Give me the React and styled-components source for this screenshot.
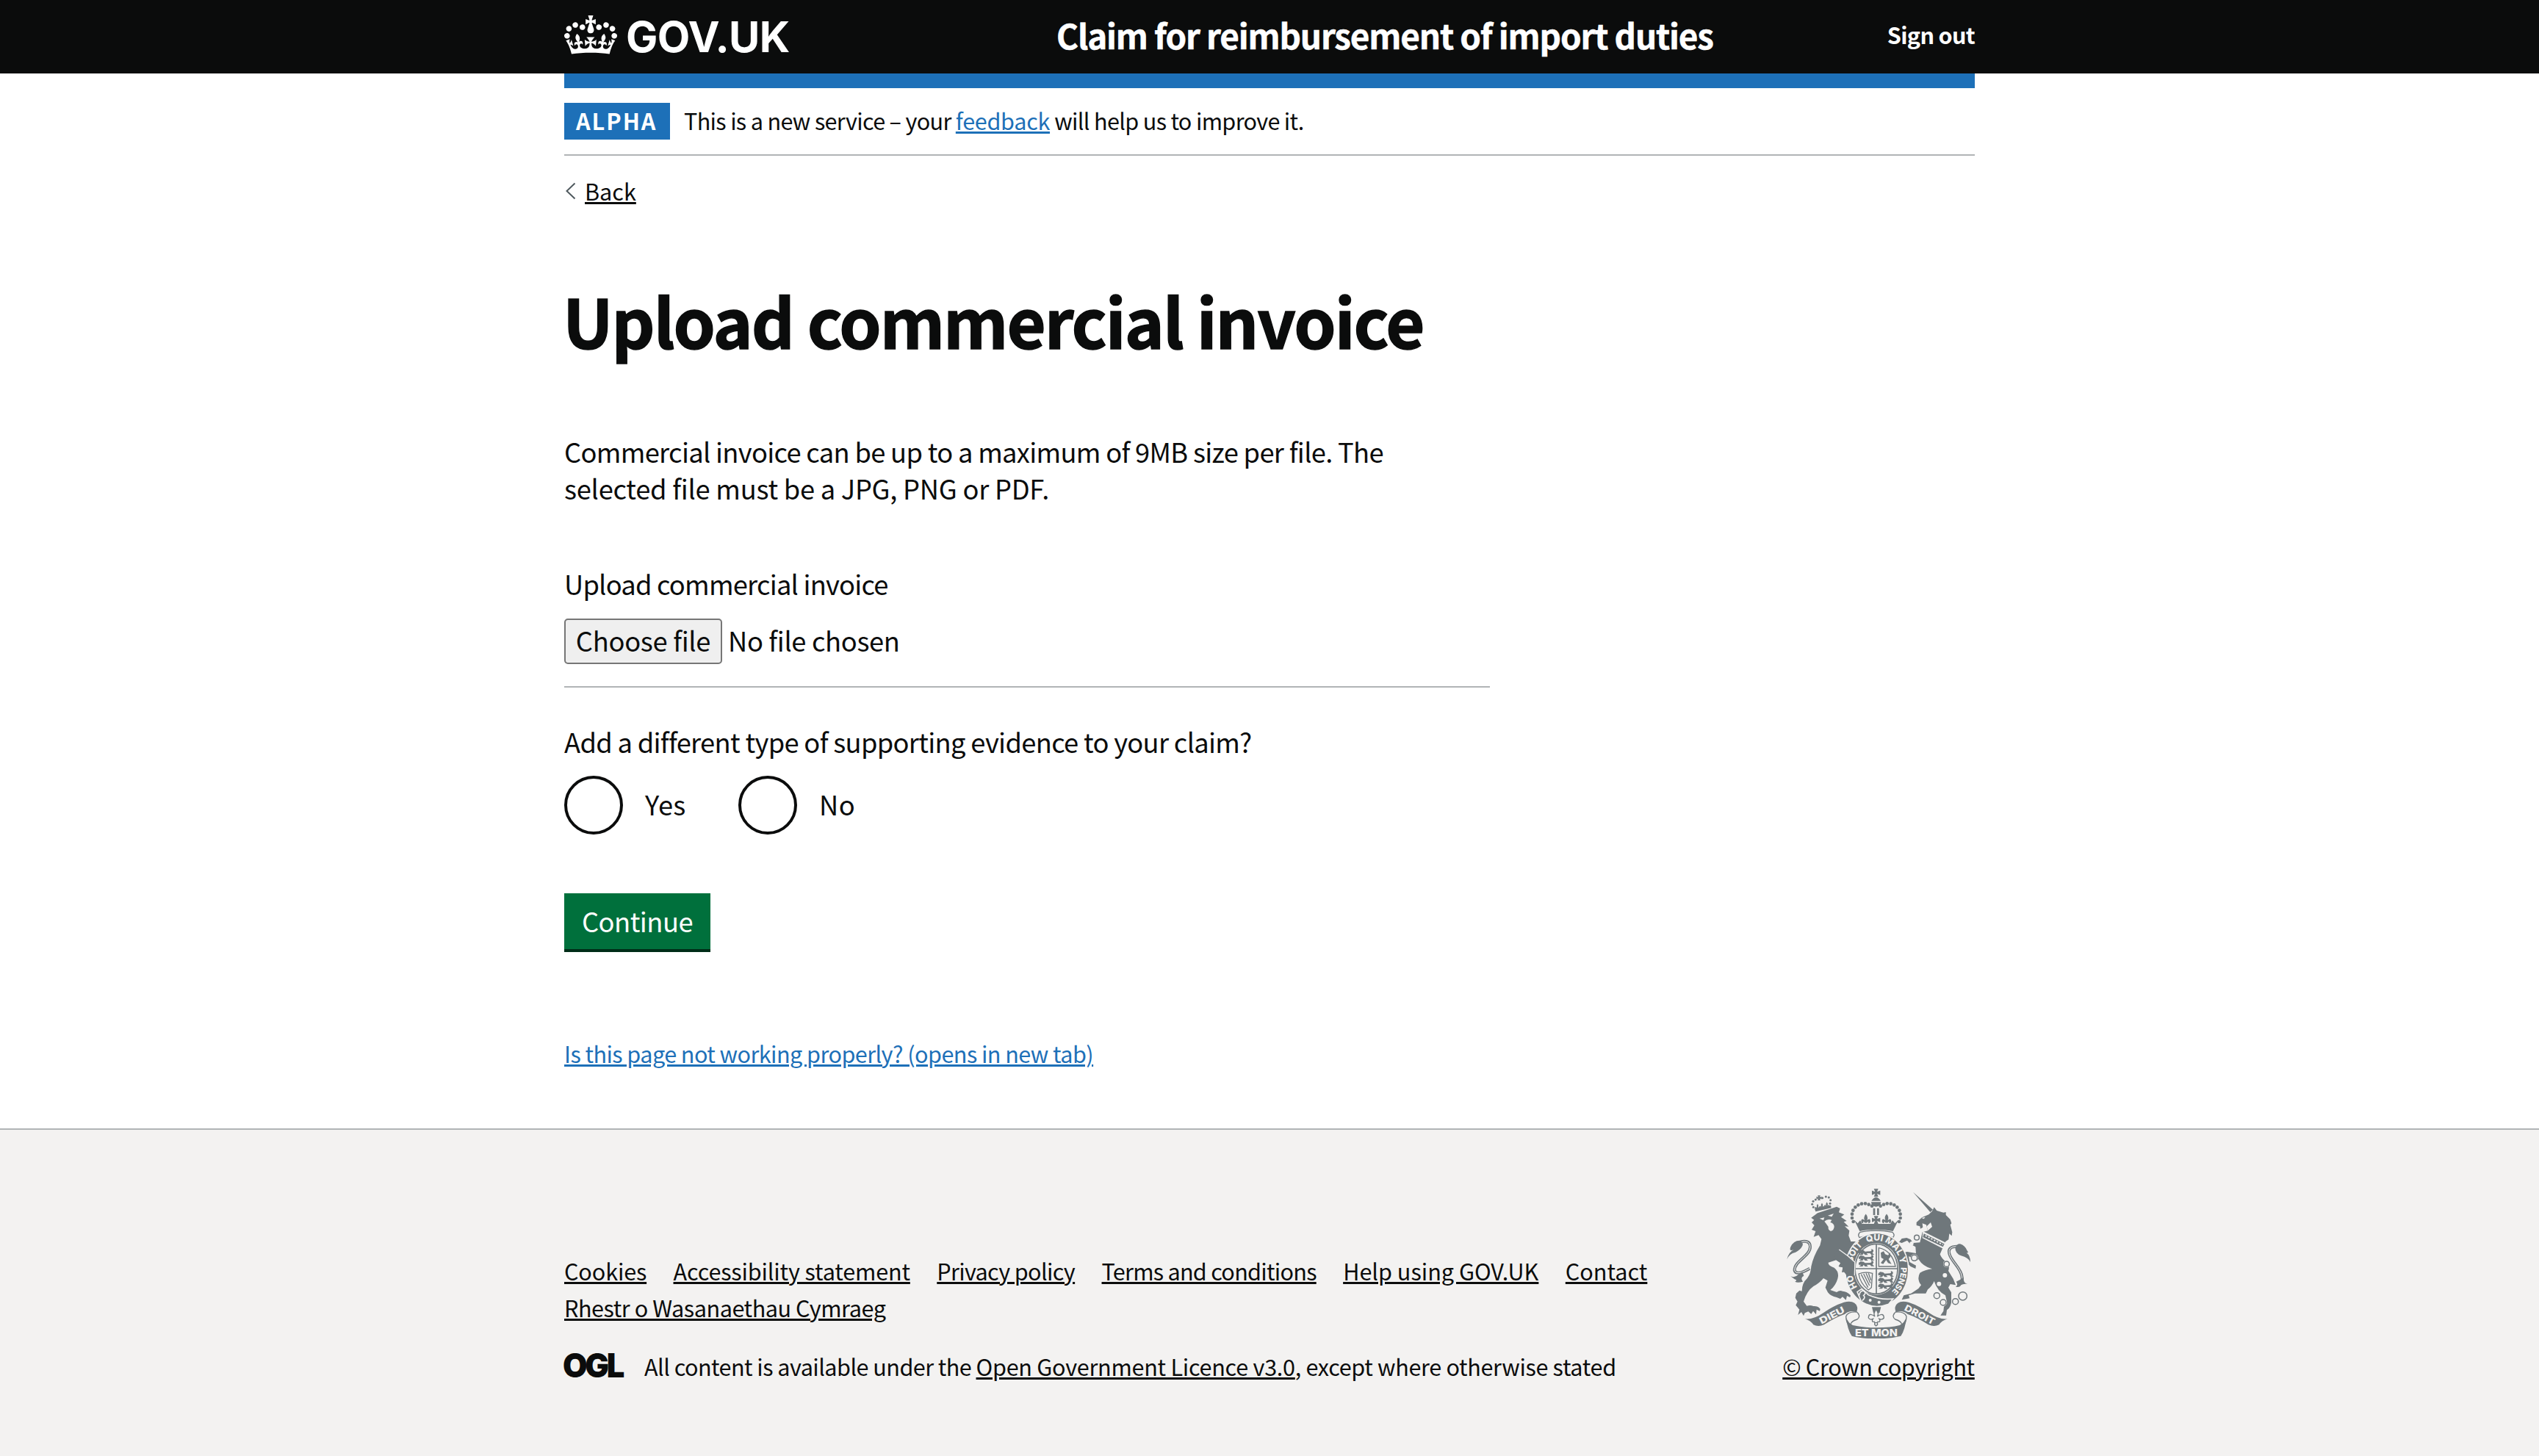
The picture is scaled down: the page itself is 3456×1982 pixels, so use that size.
import React from "react";
import styled, { createGlobalStyle } from "styled-components";

const ink = "#0b0c0c";
const blue = "#1d70b8";
const line = "#b1b4b6";
const crest = "#6f777b";
const paper = "#f3f2f1";

const GlobalStyle = createGlobalStyle`
  *, *::before, *::after { box-sizing: border-box; }
  body {
    margin: 0;
    background: ${paper};
    color: ${ink};
    font-family: "Noto Sans CJK JP", "Noto Sans", sans-serif;
    font-size: 36.3px;
    line-height: 50px;
  }
`;

const Page = styled.div`
  display: flex;
  flex-direction: column;
  height: 1982px;
  background: #fff;
  overflow: hidden;
`;

const Container = styled.div`
  width: 1920px;
  margin: 0 auto;
`;

const Track = styled.span`
  letter-spacing: ${(p) => p.$ls}px;
`;

const Link = styled.a`
  color: ${(p) => (p.$blue ? blue : ink)};
  letter-spacing: ${(p) => p.$ls || 0}px;
  text-decoration: underline;
  text-decoration-thickness: 3px;
  text-underline-offset: 2px;
  white-space: nowrap;
`;

/* Header */
const Header = styled.header`
  background: ${ink};
  height: 100px;
  flex: none;
`;

const HeaderRow = styled(Container)`
  display: grid;
  grid-template-columns: 670px 1fr auto;
  align-items: start;
  color: #fff;
`;

const Brand = styled.div`
  display: flex;
  align-items: flex-start;
  gap: 12px;
  padding-top: 21px;
`;

const Wordmark = styled.span`
  font-family: Inter, sans-serif;
  font-weight: 700;
  font-size: 57.8px;
  line-height: 60px;
  letter-spacing: -0.6px;
  margin-top: -1px;
`;

const ServiceName = styled.div`
  padding-top: 17px;
  font-weight: 700;
  font-size: 45.8px;
  line-height: 60px;
  letter-spacing: -1.15px;
  -webkit-text-stroke: 0.5px #fff;
  white-space: nowrap;
`;

const SignOut = styled.div`
  padding-top: 27px;
  font-weight: 700;
  font-size: 30.6px;
  line-height: 40px;
  letter-spacing: -0.7px;
`;

/* Phase banner */
const BlueBar = styled.div`
  height: 20px;
  background: ${blue};
`;

const Phase = styled.div`
  display: flex;
  align-items: center;
  height: 92px;
  border-bottom: 2px solid ${line};
  font-size: 30.6px;
  line-height: 40px;
`;

const PhaseText = styled.span`
  padding-bottom: 2px;
  letter-spacing: -0.67px;
`;

const Tag = styled.strong`
  width: 144px;
  height: 50px;
  padding: 4px 0 0 16px;
  margin-right: 19px;
  background: ${blue};
  color: #fff;
  font-size: 30.6px;
  line-height: 40px;
  letter-spacing: 2px;
`;

const BackRow = styled.div`
  display: flex;
  align-items: center;
  gap: 12px;
  margin-top: 28px;
  padding-left: 2px;
  font-size: 30.6px;
  line-height: 40px;
`;

/* Main */
const Main = styled.main`
  width: 1260px;
  flex: none;
`;

const Title = styled.h1`
  margin: 105px 0 104px -2px;
  font-size: 91.7px;
  line-height: 100px;
  font-weight: 700;
  letter-spacing: -2px;
  -webkit-text-stroke: 1.4px ${ink};
  white-space: nowrap;
`;

const Body = styled.p`
  margin: 0;
  display: flex;
  flex-direction: column;
  white-space: nowrap;
`;

const Label = styled.div`
  margin-top: ${(p) => p.$top}px;
  letter-spacing: ${(p) => p.$ls}px;
`;

const FileInput = styled.div`
  display: flex;
  align-items: center;
  gap: 8px;
  margin-top: 23px;
  height: 62px;
`;

const FileButton = styled.button`
  width: 215px;
  height: 62px;
  padding: 0 0 5px;
  border: 2px solid #767676;
  border-radius: 5px;
  background: #efefef;
  color: ${ink};
  font: inherit;
  letter-spacing: -0.3px;
  white-space: nowrap;
`;

const FileStatus = styled.span`
  padding-bottom: 5px;
  letter-spacing: -0.35px;
`;

const Rule = styled.hr`
  margin: 30px 0 0;
  border: 0;
  height: 2px;
  background: ${line};
`;

const Radios = styled.div`
  display: flex;
  margin-top: 22px;
`;

const Radio = styled.label`
  display: flex;
  align-items: center;
  width: ${(p) => p.$w}px;
`;

const Ring = styled.span`
  width: 80px;
  height: 80px;
  margin-right: 30px;
  border: 4px solid ${ink};
  border-radius: 50%;
`;

const RadioText = styled.span`
  padding-bottom: 4px;
  letter-spacing: ${(p) => p.$ls}px;
`;

const Submit = styled.button`
  display: block;
  width: 199px;
  height: 76px;
  margin: 80px 0 0;
  padding: 0 0 3px;
  border: 0;
  background: #00703c;
  box-shadow: 0 4px 0 #002d18;
  color: #fff;
  font: inherit;
  letter-spacing: -0.5px;
`;

const Report = styled.div`
  margin-top: 122px;
  font-size: 30.6px;
  line-height: 40px;
`;

/* Footer */
const Footer = styled.footer`
  flex: 1;
  margin-top: 82px;
  border-top: 2px solid ${line};
  background: ${paper};
  font-size: 30.6px;
  line-height: 50px;
`;

const FooterRow = styled(Container)`
  display: flex;
  justify-content: space-between;
  align-items: flex-end;
  padding-top: 80px;
`;

const FooterLinks = styled.div`
  display: flex;
  flex-wrap: wrap;
  width: 1560px;
  column-gap: 36.4px;
`;

const Licence = styled.div`
  display: flex;
  align-items: center;
  height: 40px;
  margin-top: 35px;
  line-height: 40px;
  white-space: nowrap;
`;

const Ogl = styled.span`
  width: 111px;
  margin: -2px 0 0 -2px;
  font-family: Inter, sans-serif;
  font-weight: 900;
  font-size: 45px;
  letter-spacing: -3.5px;
  transform: scaleX(0.965);
  transform-origin: left;
`;

const Copyright = styled.div`
  display: flex;
  flex-direction: column;
  align-items: center;
  gap: 18px;
  width: 262px;
  line-height: 40px;
`;

const CrownIcon = () => (
  <svg width="72" height="53" viewBox="0 0 132 97" fill="#fff">
    <path d="M25 30.2c3.5 1.5 7.7-.2 9.1-3.7 1.5-3.6-.2-7.8-3.9-9.2-3.6-1.4-7.6.3-9.1 3.9-1.4 3.5.3 7.5 3.9 9zM9 39.5c3.6 1.5 7.8-.2 9.2-3.7 1.5-3.6-.2-7.8-3.9-9.1-3.6-1.5-7.6.2-9.1 3.8-1.4 3.5.3 7.5 3.8 9zM4.4 57.2c3.5 1.5 7.7-.2 9.1-3.8 1.5-3.6-.2-7.7-3.9-9.1-3.5-1.5-7.6.3-9.1 3.8-1.4 3.5.3 7.6 3.9 9.1zm38.3-21.4c3.5 1.5 7.7-.2 9.1-3.8 1.5-3.6-.2-7.7-3.9-9.1-3.6-1.5-7.6.3-9.1 3.8-1.3 3.6.4 7.7 3.9 9.1zm64.4-5.6c-3.6 1.5-7.8-.2-9.1-3.7-1.5-3.6.2-7.8 3.8-9.2 3.6-1.4 7.7.3 9.2 3.9 1.3 3.5-.4 7.5-3.9 9zm15.9 9.3c-3.6 1.5-7.7-.2-9.1-3.7-1.5-3.6.2-7.8 3.7-9.1 3.6-1.5 7.7.2 9.2 3.8 1.5 3.5-.3 7.5-3.8 9zm4.7 17.7c-3.6 1.5-7.8-.2-9.2-3.8-1.5-3.6.2-7.7 3.9-9.1 3.6-1.5 7.7.3 9.2 3.8 1.3 3.5-.4 7.6-3.9 9.1zM89.3 35.8c-3.6 1.5-7.8-.2-9.2-3.8-1.4-3.6.2-7.7 3.9-9.1 3.6-1.5 7.7.3 9.2 3.8 1.4 3.6-.3 7.7-3.9 9.1zM69.7 17.7l8.9 4.7V9.3l-8.9 2.8c-.2-.3-.5-.6-.9-.9L72.4 0H59.6l3.5 11.2c-.3.3-.6.5-.9.9l-8.8-2.8v13.1l8.8-4.7c.3.3.6.7.9.9l-5 15.4v.1c-.2.8-.4 1.6-.4 2.4 0 4.1 3.1 7.5 7 8.1h.2c.3 0 .7.1 1 .1.4 0 .7 0 1-.1h.2c4-.6 7.1-4.1 7.1-8.1 0-.8-.1-1.7-.4-2.4V34l-5.1-15.4c.4-.2.7-.6 1-.9zM66 92.8c16.9 0 32.8 1.1 47.1 3.2 4-16.9 8.9-26.7 14-33.5l-9.6-3.4c1 4.9 1.1 7.2 0 10.2-1.5-1.4-3-4.3-4.2-8.7L108.6 76c2.8-2 5-3.2 7.5-3.3-4.4 9.4-10 11.9-13.6 11.2-4.3-.8-6.3-4.6-5.6-7.9 1-4.7 5.7-5.9 8-.5 4.3-8.7-3-11.4-7.6-8.8 7.1-7.2 7.9-13.5 2.1-21.1-8 6.1-8.1 12.3-4.5 20.8-4.7-5.4-12.1-2.5-9.5 6.2 3.4-5.2 7.9-2 7.2 3.1-.6 4.3-6.4 7.8-13.5 7.2-10.3-.9-10.9-8-11.2-13.8 2.5-.5 7.1 1.8 11 7.3L80.2 60c-4.1 4.4-8 5.3-12.3 5.4 1.4-4.4 8-11.6 8-11.6H55.5s6.4 7.2 7.9 11.6c-4.2-.1-8-1-12.3-5.4l1.4 16.4c3.9-5.5 8.5-7.7 10.9-7.3-.3 5.8-.9 12.8-11.1 13.8-7.2.6-12.9-2.9-13.5-7.2-.7-5 3.8-8.3 7.1-3.1 2.7-8.7-4.6-11.6-9.4-6.2 3.7-8.5 3.6-14.7-4.6-20.8-5.8 7.6-5 13.9 2.2 21.1-4.7-2.6-11.9.1-7.7 8.8 2.3-5.5 7.1-4.2 8.1.5.7 3.3-1.3 7.1-5.7 7.9-3.5.7-9-1.8-13.5-11.2 2.5.1 4.7 1.3 7.5 3.3l-4.7-15.4c-1.2 4.4-2.7 7.2-4.3 8.7-1.1-3-.9-5.3 0-10.2l-9.5 3.4c5 6.9 9.9 16.7 14 33.5 14.8-2.1 30.8-3.2 47.7-3.2z" />
  </svg>
);

const archPearls = [
  [368, 219], [363, 204], [363, 188], [367, 173], [376, 160],
  [388, 151], [402, 146], [417, 145], [431, 149], [444, 155],
];

const lionCrownPearls = [
  [205, 160], [200, 148], [204, 136], [214, 129], [242, 122], [256, 117], [268, 120], [275, 131], [273, 145],
];

const chainLinks = [
  [627, 284, 10], [617, 367, 12], [606, 308, 5], [749, 392, 11], [742, 438, 6], [718, 473, 6],
  [709, 521, 12], [735, 549, 12], [785, 545, 12], [815, 523, 17],
];

const Fleur = ({ x, y, s = 1 }) => (
  <path
    transform={`translate(${x} ${y}) scale(${s})`}
    d="M0-28Q12-14 5 0Q18-12 20 2Q20 12 10 12Q14 6 8 5L5 10H-5L-8 5Q-14 6-10 12Q-20 12-20 2Q-18-12-5 0Q-12-14 0-28Z"
  />
);

const Pattee = ({ x, y, s = 1 }) => (
  <path
    transform={`translate(${x} ${y}) scale(${s})`}
    d="M-9-16H9L4-4L17-9V9L4 4L9 16H-9L-4 4L-17 9V-9L-4-4Z"
  />
);

const Passant = ({ x, y }) => (
  <path
    transform={`translate(${x} ${y})`}
    d="M0-4L8-10L20-8L26-3L48-4Q56-8 50-14Q62-12 60-4L56 3L64 10H52L46 4L32 4L38 11H26L20 4L16 11H2L10 4L0 4Z"
  />
);

const RoyalArms = () => (
  <svg width="250" height="204" viewBox="96 84 750 612" fill={crest}>
    {/* lion */}
    <path d="M196 203L222 184L300 158L314 165L309 181L331 190L318 200L341 216L329 220L349 239L333 238L352 256L349 276L358 300L382 300L362 326L345 352L372 386L370 436L356 441L346 430L340 437L330 424L322 426L325 406L308 402L316 388L298 376L266 386Q264 398 290 407Q312 425 304 452Q296 480 274 498L300 507Q312 498 324 503Q342 504 357 520L355 528L342 522L338 539L324 526L315 534L300 528Q276 524 264 508L254 488L263 460L246 450Q230 470 205 483Q178 502 165 545L178 563Q192 558 205 564Q224 562 233 576L231 584L218 578L216 598L204 584L196 596L184 586L170 592L165 604L156 588L142 600L148 578L133 560L140 545L131 530L135 512L148 500L158 503Q158 470 180 450Q195 430 196 402Q205 360 232 316L238 290L226 274L206 281L214 258L198 252L209 234L198 222L208 212Z" />
    <path d="M150 302Q192 292 192 322C192 360 126 380 128 418Q135 442 190 410" fill="none" stroke={crest} strokeWidth="12" />
    <path d="M150 302Q192 292 192 322C192 360 126 380 128 418Q135 442 190 410" fill="none" stroke={paper} strokeWidth="3" />
    <path d="M97 373Q104 344 124 334Q104 342 112 322Q124 296 148 296Q166 302 160 318Q152 334 132 344Q106 350 97 373Z" />
    <path d="M112 442Q130 450 142 436L160 424L166 440Q150 448 162 464Q140 470 130 464Q142 458 128 454Z" />
    <path d="M230 206L250 202L246 213ZM264 194L288 186L280 199ZM250 218Q262 206 280 212L274 222Q290 226 290 240Q288 256 276 258Q264 254 266 240L256 226Z" fill={paper} />
    <path d="M210 166L276 152L278 163L214 178Z" />
    {lionCrownPearls.map(([x, y]) => (
      <circle key={`${x}-${y}`} cx={x} cy={y} r="4.5" />
    ))}
    <Pattee x={228} y={122} s={0.62} />
    <Fleur x={222} y={162} s={0.55} />
    <Fleur x={240} y={158} s={0.55} />
    <Fleur x={260} y={154} s={0.55} />

    {/* unicorn */}
    <path d="M612 98L693 170L682 180ZM626 234L626 222L648 202L676 190L690 176L698 160L709 174L736 182L746 180L746 192L764 210L769 226L764 232L772 262L770 277L760 268L757 292L745 300L733 326L722 352Q728 370 748 384Q764 398 756 420L776 452L786 478L764 474L756 488L768 508L768 550Q764 572 750 580L747 602L724 602L736 584L738 566L751 552L744 520Q712 504 698 462Q690 482 672 496L664 512L620 512L594 520L598 532L566 538L574 520L604 512L634 492L645 478Q626 454 640 428Q660 416 690 412Q652 402 634 372L628 378L594 360L598 384L624 398L622 411L602 402L580 380L570 346L588 342L624 348L622 322L600 310L588 296L566 306L555 302L566 288L586 285L602 292L612 306L640 304L650 262L672 256L666 232L650 226L652 242L642 248L640 238Z" />
    <path d="M652 258L748 306L736 330L650 286Z" fill={paper} />
    <path d="M656 268L740 310L734 322L652 282Z" />
    <path d="M662 276L734 313" stroke={paper} strokeWidth="5" strokeDasharray="7 6" />
    <path d="M646 204L662 200L656 208ZM668 238L684 222L690 240L672 256Z" fill={paper} />
    <path d="M792 320Q752 320 760 350C768 384 818 414 812 462" fill="none" stroke={crest} strokeWidth="12" />
    <path d="M792 320Q752 320 760 350C768 384 818 414 812 462" fill="none" stroke={paper} strokeWidth="3" />
    <path d="M846 384Q838 366 808 358Q784 348 784 326Q792 308 804 310Q824 316 832 336Q842 348 830 346Q846 358 846 384Z" />
    <path d="M818 446Q816 468 834 474Q816 472 808 478Q804 488 786 485Q798 476 788 464L804 456Z" />
    {chainLinks.map(([cx, cy, r]) => (
      <g key={`${cx}-${cy}`}>
        <circle cx={cx} cy={cy} r={r + 3} fill={paper} />
        {r > 9 && <circle cx={cx} cy={cy} r={r} fill="none" stroke={crest} strokeWidth="4.5" />}
      </g>
    ))}

    {/* crown */}
    <Pattee x={461} y={101} />
    <path d="M442 134Q461 104 480 134ZM441 139H481Q480 156 461 158Q442 156 441 139Z" />
    {archPearls.map(([x, y]) => (
      <g key={`${x}-${y}`}>
        <circle cx={x} cy={y} r="7" />
        <circle cx={923 - x} cy={y} r="7" />
      </g>
    ))}
    <path d="M449 164H457V192H449ZM465 164H473V192H465Z" />
    <Fleur x={419} y={214} s={0.95} />
    <Fleur x={504} y={214} s={0.95} />
    <Pattee x={461} y={212} />
    <path d="M372 212L386 226L396 214L404 228H519L528 214L538 226L552 212L530 258Q461 244 394 258Z" />
    <path d="M396 262Q461 248 527 262Q540 272 530 284Q461 262 393 284Q384 272 396 262Z" fill={paper} stroke={crest} strokeWidth="4" />

    {/* garter and shield */}
    <ellipse cx="464" cy="415" rx="132" ry="152" fill={paper} />
    <ellipse cx="464" cy="415" rx="127" ry="147" />
    <ellipse cx="462" cy="412" rx="92" ry="106" fill={paper} />
    <ellipse cx="462" cy="412" rx="87" ry="102" fill="none" stroke={crest} strokeWidth="5" />
    <path d="M462 310V514M374 411H550" stroke={crest} strokeWidth="5" />
    {[344, 367, 391].map((y) => <Passant key={y} x={390} y={y} />)}
    {[434, 458, 482].map((y) => <Passant key={y} x={470} y={y} />)}
    <path d="M472 402V326Q525 336 540 402Z" fill="none" stroke={crest} strokeWidth="4" />
    <path d="M480 346L492 340L498 352L510 356L518 346L520 362L512 372L524 392L510 388L502 376L490 392L480 388L492 372L482 366Z" />
    <path d="M390 432Q415 422 446 430L442 488L430 498Q396 472 390 432ZM400 434L428 488M410 432L434 480M420 430L438 470M430 430L440 458" fill="none" stroke={crest} strokeWidth="4" />
    <path id="garter" d="M462 529C406 529 362 476 362 412S406 296 462 296S562 348 562 412S518 529 462 529" fill="none" />
    <g fill={paper} fontFamily="Inter, sans-serif" fontWeight="800" fontSize="36" textAnchor="middle">
      <text><textPath href="#garter" startOffset="17.5%">HO</textPath></text>
      <text><textPath href="#garter" startOffset="35%">SOIT</textPath></text>
      <text><textPath href="#garter" startOffset="49%">QUI</textPath></text>
      <text><textPath href="#garter" startOffset="61%">MAL</textPath></text>
      <text><textPath href="#garter" startOffset="70%">Y</textPath></text>
      <text fontSize="33"><textPath href="#garter" startOffset="82%">PENSE</textPath></text>
    </g>
    <path d="M384 506L402 494L430 518Q480 540 530 534L512 556Q450 580 400 544Z" stroke={paper} strokeWidth="5" />
    <circle cx="437" cy="540" r="6" fill={paper} />
    <circle cx="473" cy="548" r="6" fill={paper} />
    <path d="M392 520Q396 498 412 502Q422 512 410 520Q420 530 404 542" fill="none" stroke={paper} strokeWidth="5" />

    {/* lion's foreleg, in front of the garter */}
    <path d="M310 333L346 360L373 386L371 436L356 442L346 430L340 437L330 424L322 426L325 406L308 402L316 388L298 376L290 350Z" />
    <path d="M310 333L346 359L375 385L373 438" fill="none" stroke={paper} strokeWidth="4" />

    {/* ribbon */}
    <path d="M170 616Q205 620 245 592Q290 560 330 548Q376 538 384 568Q386 580 380 588Q352 580 334 596Q290 612 248 640Q225 650 205 640Q195 624 170 616Z" />
    <path d="M753 616Q718 620 678 592Q633 560 593 548Q547 538 539 568Q537 580 543 588Q571 580 589 596Q633 612 675 640Q698 650 718 640Q728 624 753 616Z" />
    <path d="M380 586Q402 604 384 618Q360 624 356 640M543 586Q521 604 539 618Q563 624 567 640M380 588Q345 586 338 606Q338 630 354 648M543 588Q578 586 585 606Q585 630 569 648" fill="none" stroke={crest} strokeWidth="4" />
    <path d="M338 608Q346 632 366 642Q410 652 461 652Q520 652 557 642Q577 632 585 608Q580 660 562 686Q520 697 461 697Q402 697 362 686Q344 660 338 608Z" />
    <g fill={paper} fontFamily="Inter, sans-serif" fontWeight="800">
      <text transform="translate(238 638) rotate(-27)" fontSize="38" textLength="110" lengthAdjust="spacingAndGlyphs">DIEU</text>
      <text transform="translate(574 580) rotate(27)" fontSize="37" textLength="134" lengthAdjust="spacingAndGlyphs">DROIT</text>
      <text x="375" y="688" fontSize="41" textLength="174" lengthAdjust="spacingAndGlyphs">ET MON</text>
    </g>
    <path d="M444 568H481L475 592H450Z" />
    <path d="M461 578Q474 594 466 606Q492 588 493 612Q486 622 474 616Q482 630 468 628L461 644L454 628Q440 630 448 616Q436 622 430 612Q430 588 456 606Q448 594 461 578Z" fill={paper} stroke={crest} strokeWidth="4" />
    <circle cx="461" cy="637" r="6" fill={paper} stroke={crest} strokeWidth="4" />
  </svg>
);

const footerLinks = [
  ["Cookies", -0.15],
  ["Accessibility statement", -0.15],
  ["Privacy policy", -0.66],
  ["Terms and conditions", -0.74],
  ["Help using GOV.UK", 0],
  ["Contact", 0],
  ["Rhestr o Wasanaethau Cymraeg", -0.45],
];

export default function App() {
  return (
    <Page>
      <GlobalStyle />
      <Header>
        <HeaderRow>
          <Brand>
            <CrownIcon />
            <Wordmark>GOV.UK</Wordmark>
          </Brand>
          <ServiceName>Claim for reimbursement of import duties</ServiceName>
          <SignOut>Sign out</SignOut>
        </HeaderRow>
      </Header>

      <Container>
        <BlueBar />
        <Phase>
          <Tag>ALPHA</Tag>
          <PhaseText>
            This is a new service – your <Link $blue $ls={-0.3}>feedback</Link> will help us to improve it.
          </PhaseText>
        </Phase>
        <BackRow>
          <svg width="14" height="24" viewBox="0 0 14 24" fill="none" stroke="#505a5f" strokeWidth="2">
            <path d="M12.5 1.5L1.5 12L12.5 22.5" />
          </svg>
          <Link>Back</Link>
        </BackRow>

        <Main>
          <Title>Upload commercial invoice</Title>
          <Body>
            <Track $ls={-0.68}>Commercial invoice can be up to a maximum of 9MB size per file. The</Track>
            <Track $ls={-0.25}>selected file must be a JPG, PNG or PDF.</Track>
          </Body>
          <Label $top={80} $ls={-0.78}>Upload commercial invoice</Label>
          <FileInput>
            <FileButton>Choose file</FileButton>
            <FileStatus>No file chosen</FileStatus>
          </FileInput>
          <Rule />
          <Label $top={48} $ls={-0.68}>Add a different type of supporting evidence to your claim?</Label>
          <Radios>
            <Radio $w={237}>
              <Ring />
              <RadioText $ls={0.3}>Yes</RadioText>
            </Radio>
            <Radio $w={200}>
              <Ring />
              <RadioText $ls={0.5}>No</RadioText>
            </Radio>
          </Radios>
          <Submit>Continue</Submit>
          <Report>
            <Link $blue $ls={-0.56}>Is this page not working properly? (opens in new tab)</Link>
          </Report>
        </Main>
      </Container>

      <Footer>
        <FooterRow>
          <div>
            <FooterLinks>
              {footerLinks.map(([text, ls]) => (
                <Link key={text} $ls={ls}>{text}</Link>
              ))}
            </FooterLinks>
            <Licence>
              <Ogl>OGL</Ogl>
              <span>
                <Track $ls={-0.55}>All content is available under the </Track>
                <Link $ls={-0.27}>Open Government Licence v3.0</Link>
                <Track $ls={-0.34}>, except where otherwise stated</Track>
              </span>
            </Licence>
          </div>
          <Copyright>
            <RoyalArms />
            <Link $ls={-0.36}>© Crown copyright</Link>
          </Copyright>
        </FooterRow>
      </Footer>
    </Page>
  );
}
